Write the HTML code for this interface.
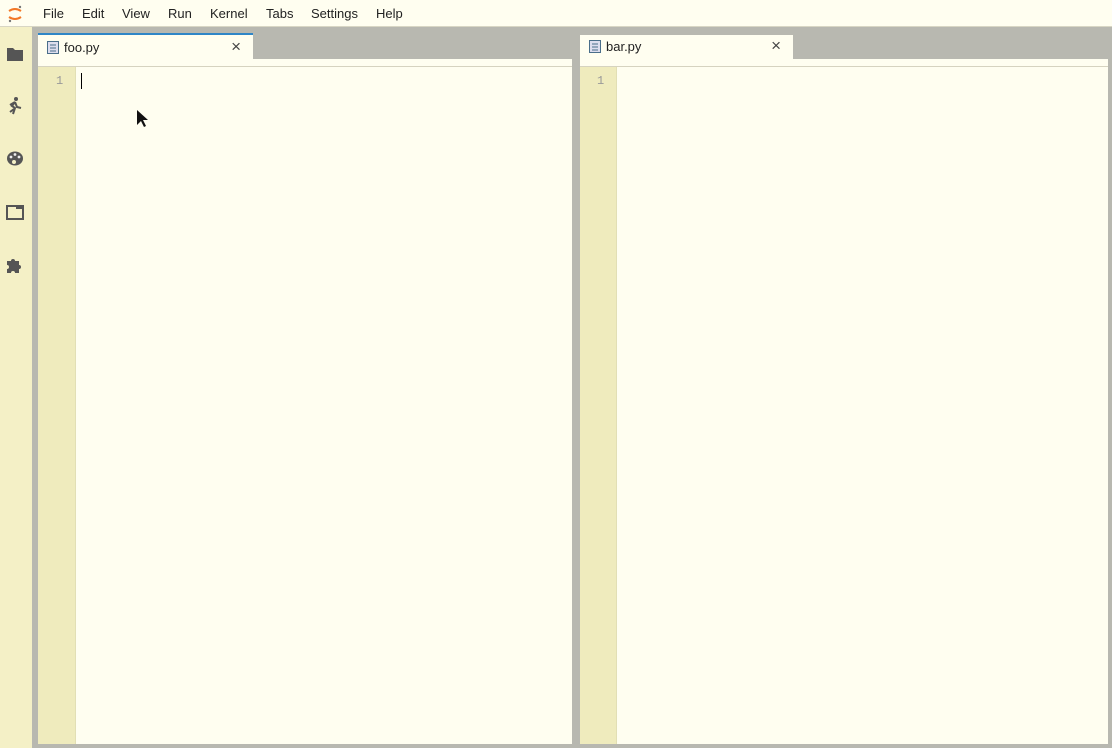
<!DOCTYPE html>
<html><head><style>
*{margin:0;padding:0;box-sizing:border-box}
body{width:1112px;height:748px;overflow:hidden;background:#b8b8b0;font-family:"Liberation Sans",sans-serif;position:relative}
.a{position:absolute}
.menu{left:0;top:0;width:1112px;height:27px;background:#fffef0;border-bottom:1px solid #d8d6c4}
.menu span{position:absolute;top:6px;font-size:13px;color:#222}
.side{left:0;top:27px;width:32px;height:721px;background:#f4f0c6}
.tab{height:26px;background:#fffef0;font-size:13px;color:#222}
.tab .t{position:absolute;left:26px;top:5px}
.tab .x{position:absolute;right:12px;top:2px;font-size:17px;color:#444}
.ed{background:#fffef0}
.gut{background:#efebbd;border-right:1px solid #e2dfb4}
.ln{font-family:"Liberation Mono",monospace;font-size:12px;color:#999}
</style></head><body>
<div class="a menu">
<svg class="a" style="left:6px;top:4px" width="18" height="20"><path d="M3 7 Q9 3 15 7" stroke="#f37726" stroke-width="2" fill="none"/><path d="M3 13 Q9 17 15 13" stroke="#f37726" stroke-width="2" fill="none"/><circle cx="14" cy="3" r="1.2" fill="#777"/><circle cx="4" cy="17" r="1.2" fill="#777"/></svg>
<span style="left:43px">File</span><span style="left:82px">Edit</span><span style="left:122px">View</span><span style="left:168px">Run</span><span style="left:210px">Kernel</span><span style="left:266px">Tabs</span><span style="left:311px">Settings</span><span style="left:376px">Help</span>
</div>
<div class="a side">
<svg class="a" style="left:7px;top:20px" width="18" height="14"><path d="M0 1h6l2 2h8v11H0z" fill="#555"/></svg>
<svg class="a" style="left:7px;top:70px" width="16" height="18"><circle cx="9" cy="2" r="2" fill="#555"/><path d="M8 5l-3 4 3 2-2 6M8 5l2 5 4 1M8 5L3 8M7 12l-4 3" stroke="#555" stroke-width="2" fill="none"/></svg>
<svg class="a" style="left:7px;top:124px" width="16" height="15"><ellipse cx="8" cy="7.5" rx="8" ry="7" fill="#555"/><circle cx="4" cy="6" r="1.4" fill="#eee"/><circle cx="8" cy="3.5" r="1.4" fill="#eee"/><circle cx="12" cy="6" r="1.4" fill="#eee"/><circle cx="7" cy="11" r="2" fill="#f4f0c6"/></svg>
<svg class="a" style="left:6px;top:178px" width="18" height="15"><rect x="1" y="1" width="16" height="13" fill="none" stroke="#555" stroke-width="2"/><rect x="10" y="1" width="7" height="3" fill="#555"/></svg>
<svg class="a" style="left:6px;top:229px" width="18" height="18"><path d="M1 5h4a2 2 0 1 1 4 0h4v4a2 2 0 1 1 0 4v4H9a2 2 0 1 0-4 0H1v-4a2 2 0 1 0 0-4z" fill="#555"/></svg>
</div>
<div class="a tab" style="left:38px;top:33px;width:215px;border-top:2px solid #2f86c7">
<svg class="a" style="left:9px;top:6px" width="12" height="13"><rect x="0.5" y="0.5" width="11" height="12" fill="#dde" stroke="#4a6e8a"/><path d="M3 4h6M3 7h6M3 10h6" stroke="#4a6e8a"/></svg>
<span class="t">foo.py</span><span class="x">×</span></div>
<div class="a ed" style="left:38px;top:59px;width:534px;height:7px"></div>
<div class="a ed" style="left:38px;top:66px;width:534px;height:678px;border-top:1px solid #d6d3c0"></div>
<div class="a gut" style="left:38px;top:67px;width:38px;height:677px"></div>
<div class="a ln" style="left:56px;top:74px">1</div>
<div class="a" style="left:81px;top:73px;width:1px;height:16px;background:#000"></div>
<svg class="a" style="left:136px;top:109px" width="12" height="20"><path d="M1 1v15l4-4 3 6 2-1-3-6h5z" fill="#111"/></svg>
<div class="a tab" style="left:580px;top:35px;width:213px;height:24px">
<svg class="a" style="left:9px;top:5px" width="12" height="13"><rect x="0.5" y="0.5" width="11" height="12" fill="#dde" stroke="#4a6e8a"/><path d="M3 4h6M3 7h6M3 10h6" stroke="#4a6e8a"/></svg>
<span class="t" style="top:4px">bar.py</span><span class="x" style="top:1px">×</span></div>
<div class="a ed" style="left:580px;top:59px;width:528px;height:7px"></div>
<div class="a ed" style="left:580px;top:66px;width:528px;height:678px;border-top:1px solid #d6d3c0"></div>
<div class="a gut" style="left:580px;top:67px;width:37px;height:677px"></div>
<div class="a ln" style="left:597px;top:74px">1</div>
</body></html>
